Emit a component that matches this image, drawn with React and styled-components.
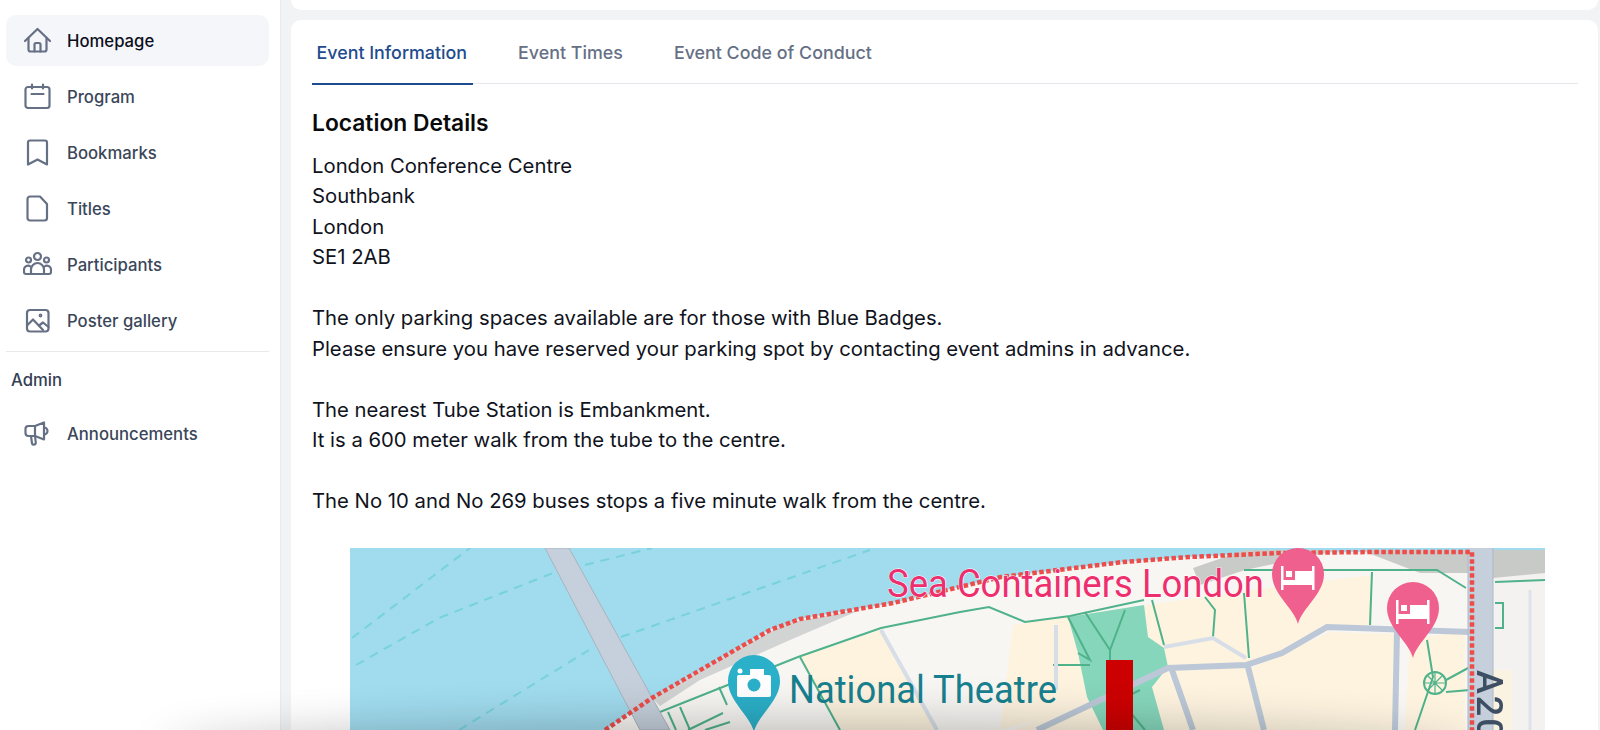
import React from 'react';
import styled, { createGlobalStyle } from 'styled-components';

const GlobalStyle = createGlobalStyle`
  html, body {
    margin: 0;
    height: 100%;
    overflow: hidden;
    background: #f2f3f5;
    font-family: Inter, "Liberation Sans", sans-serif;
  }
  * { box-sizing: border-box; }
`;

const Page = styled.div`
  display: flex;
  height: 730px;
  overflow: hidden;
`;

const Sidebar = styled.nav`
  flex: 0 0 281px;
  padding: 15px 11px 0 6px;
  background: #fff;
  border-right: 1px solid #e9ebef;
`;

const NavList = styled.div`
  display: flex;
  flex-direction: column;
  gap: 5px;
`;

const NavRow = styled.a`
  display: flex;
  align-items: center;
  gap: 15px;
  height: 51px;
  padding-left: 17px;
  border-radius: 10px;
  background: ${(p) => (p.$active ? '#f4f6fa' : 'transparent')};
  color: ${(p) => (p.$active ? '#0b0f1a' : '#3a4659')};
  font-size: 16.7px;
  font-weight: 500;
`;

const IconBox = styled.svg`
  flex: 0 0 29px;
  width: 29px;
  height: 29px;
  fill: none;
  stroke: #667085;
  stroke-width: 2.2;
  stroke-linecap: round;
  stroke-linejoin: round;
`;

const Divider = styled.hr`
  margin: 5px 0 0;
  border: 0;
  border-top: 1px solid #e7e9ed;
`;

const SectionLabel = styled.div`
  padding: 18px 0 18px 5px;
  color: #344054;
  font-size: 16.7px;
  line-height: 20px;
  font-weight: 500;
`;

const Main = styled.main`
  flex: 1;
  min-width: 0;
  display: flex;
  flex-direction: column;
  gap: 10px;
  padding: 0 2px 0 10px;
`;

const TopCard = styled.div`
  flex: 0 0 10px;
  background: #fff;
  border-radius: 0 0 10px 10px;
`;

const ContentCard = styled.section`
  flex: 1;
  padding: 0 20px 0 21px;
  background: #fff;
  border-radius: 10px 10px 0 0;
`;

const TabList = styled.div`
  display: flex;
  gap: 41px;
  height: 64px;
  border-bottom: 1px solid #e4e7ec;
`;

const Tab = styled.div`
  display: flex;
  align-items: center;
  height: 65px;
  padding: 2px 5.5px 0 4.5px;
  font-size: 17.85px;
  font-weight: 500;
  color: ${(p) => (p.$active ? '#1f4b8f' : '#667085')};
  border-bottom: 2px solid ${(p) => (p.$active ? '#1f4b8f' : 'transparent')};
`;

const Heading = styled.h2`
  margin: 0;
  padding-top: 24px;
  font-size: 22.8px;
  line-height: 30px;
  font-weight: 600;
  color: #0a0a0a;
`;

const Body = styled.p`
  margin: 12.5px 0 0;
  font-size: 20.3px;
  line-height: 30.5px;
  color: #10131c;
`;

const MapFrame = styled.svg`
  display: block;
  width: 1195px;
  height: 182px;
  margin: 31px 0 0 38px;
`;

const BottomShadow = styled.div`
  position: fixed;
  left: 170px;
  right: 130px;
  bottom: -50px;
  height: 50px;
  border-radius: 50%;
  box-shadow: 0 0 45px 8px rgba(0, 0, 0, 0.24);
  pointer-events: none;
`;

const HomeIcon = () => (
  <IconBox viewBox="0 0 29 29">
    <path d="M2 15 14.5 3 27 15" />
    <path d="M5.5 12v11.5a2 2 0 0 0 2 2h14a2 2 0 0 0 2-2V12" />
    <path d="M11.5 25.5v-7a1.5 1.5 0 0 1 1.5-1.5h3a1.5 1.5 0 0 1 1.5 1.5v7" />
  </IconBox>
);

const CalendarIcon = () => (
  <IconBox viewBox="0 0 29 29">
    <rect x="2.5" y="5" width="24" height="21" rx="2.5" />
    <path d="M9 2.5v4M20 2.5v4M8.5 12h12" />
  </IconBox>
);

const BookmarkIcon = () => (
  <IconBox viewBox="0 0 29 29">
    <path d="M5 4.5a2 2 0 0 1 2-2h15a2 2 0 0 1 2 2v22l-9.5-5-9.5 5z" />
  </IconBox>
);

const FileIcon = () => (
  <IconBox viewBox="0 0 29 29">
    <path d="M7 2.5h10l7 7.5v14a2.5 2.5 0 0 1-2.5 2.5H7A2.5 2.5 0 0 1 4.5 24V5A2.5 2.5 0 0 1 7 2.5z" />
  </IconBox>
);

const UsersIcon = () => (
  <IconBox viewBox="0 0 29 29">
    <circle cx="14.5" cy="6.5" r="3.5" />
    <circle cx="5.5" cy="10" r="2.5" />
    <circle cx="23.5" cy="10" r="2.5" />
    <path d="M8 24v-4.5a6.5 6.5 0 0 1 13 0V24z" />
    <path d="M8 24H3a2 2 0 0 1-2-2v-2.500a4 4 0 0 1 6.500-3M21 24h5a2 2 0 0 0 2-2v-2.500a4 4 0 0 0-6.500-3" />
  </IconBox>
);

const ImageIcon = () => (
  <IconBox viewBox="0 0 29 29">
    <rect x="4" y="4" width="21.5" height="21.5" rx="3" />
    <path d="M4 19.5 10 13.5 20 24" />
    <path d="M16 19.5 20 16.5 25.5 21" />
    <circle cx="17.5" cy="9.5" r="0.8" />
  </IconBox>
);

const MegaphoneIcon = () => (
  <IconBox viewBox="0 0 29 29">
    <path d="M21 3.5v17L12 17H5.500A3 3 0 0 1 2.500 14v-4a3 3 0 0 1 3-3H12z" />
    <path d="M21 8.5a3.5 3.5 0 0 1 0 7" />
    <path d="M8 17l1 7.5a2 2 0 0 0 3.800-.5L12 17" />
    <path d="M12 7v10" />
  </IconBox>
);

const navItems = [
  { label: 'Homepage', Icon: HomeIcon, active: true },
  { label: 'Program', Icon: CalendarIcon },
  { label: 'Bookmarks', Icon: BookmarkIcon },
  { label: 'Titles', Icon: FileIcon },
  { label: 'Participants', Icon: UsersIcon },
  { label: 'Poster gallery', Icon: ImageIcon },
];

const tabs = ['Event Information', 'Event Times', 'Event Code of Conduct'];

const Pin = ({ x, y, tip, color, children }) => (
  <g>
    <path
      d={`M${x} ${tip} C${x - 4} ${y + 34} ${x - 26} ${y + 20} ${x - 26} ${y} a26 26 0 0 1 52 0 C${x + 26} ${y + 20} ${x + 4} ${y + 34} ${x} ${tip}z`}
      fill={color}
    />
    {children}
  </g>
);

const Bed = ({ x, y }) => (
  <g fill="#fff" stroke="none">
    <rect x={x - 17} y={y - 9} width="2.5" height="24" />
    <rect x={x + 14} y={y - 9} width="2.5" height="24" />
    <rect x={x - 16} y={y + 5} width="32" height="5" />
    <rect x={x - 3} y={y - 4} width="18" height="10" />
    <rect x={x - 12} y={y - 4} width="6" height="6" />
  </g>
);

const mapLabel = {
  fontFamily: 'Roboto, sans-serif',
  lengthAdjust: 'spacingAndGlyphs',
};

const shoreline = 'M605 730 652 698 735 650 770 630 800 619 893 603 1001 577 1123 562 1189 557 1278 553 1376 552';

const LocationMap = () => (
  <MapFrame viewBox="350 548 1195 182">
    <g style={{ filter: 'blur(0.6px)' }}>
      <rect x="350" y="548" width="1195" height="182" fill="#a0dbee" />

      {/* land */}
      <path d={`${shoreline} 1545 551V730z`} fill="#f8f6f3" />
      <path d="M800 657 881 630 937 730H840z" fill="#fdf3df" />
      <path d="M1013 625 1070 616 1250 590 1372 575V625L1330 630 1250 665 1000 730z" fill="#fdf3df" />
      <path d="M1013 730 1170 670 1250 668 1330 632 1395 634V730z" fill="#fdf3df" />
      <path d="M1410 640 1465 630V730H1405z" fill="#fdf3df" />
      <path d="M1493 573H1545V730H1493z" fill="#f3f2f1" />
      <path d="M1493 670H1512V730H1493z" fill="#fbf3e2" />

      {/* shadows on the embankment */}
      <path d="M652 698 735 650 787 623 860 610 790 640 700 680 660 706z" fill="#d2d3d3" />
      <path d="M1193 568 1245 550H1340L1245 570 1200 585z" fill="#c9cbc9" />
      <path d="M1360 550H1468V573H1420z" fill="#c9cbc9" />
      <path d="M1493 550H1545V573L1493 578z" fill="#c8cac8" />

      {/* park */}
      <path d="M1068 617 1144 605 1148 637 1164 648 1168 667 1152 687 1164 730H1103L1087 697 1078 653z" fill="#86d6bb" />

      {/* water path dashes */}
      <g fill="none" stroke="#78d2dc" strokeWidth="2" strokeDasharray="9 7">
        <path d="M352 638 470 548" />
        <path d="M356 665 439 618 553 573" />
        <path d="M585 565 652 548" />
        <path d="M459 730 589 650" />
        <path d="M621 637 870 550" />
      </g>

      {/* footpaths */}
      <g fill="none" stroke="#4fb28a" strokeWidth="2">
        <path d="M660 712 798 657 881 628 960 612 989 607 1025 622 1070 616 1144 600" />
        <path d="M800 657 840 730" />
        <path d="M680 707 690 730M668 712 676 730M723 713 688 730M730 722 705 730M719 687 727 705" />
        <path d="M1152 600 1164 645M1205 597 1215 610 1213 637M1244 593 1249 658" />
        <path d="M1244 570H1437L1466 588M1372 572 1370 625" />
        <path d="M1495 582 1545 580M1495 603H1503V628H1495" />
        <path d="M1427 640 1433 677 1415 730M1446 680 1470 667M1446 692 1470 690" />
        <circle cx="1435" cy="683" r="11" />
        <path d="M1424 683H1446M1435 672V694M1427 675 1443 691M1443 675 1427 691" strokeWidth="1.2" />
        <path d="M1068 617 1090 660 1078 653M1085 612 1110 650 1125 610M1053 665H1090M1110 650V680M1140 690 1120 700 1145 730" />
      </g>

      {/* roads */}
      <g fill="none" stroke="#d7dee7" strokeWidth="4">
        <path d="M881 630 937 730" />
        <path d="M1164 647 1213 638 1246 658" />
        <path d="M1056 625V690" />
      </g>
      <g fill="none" stroke="#bcc8d7" strokeWidth="6">
        <path d="M1037 730 1168 668 1246 665 1282 653 1327 627 1470 632" />
        <path d="M1172 670 1193 730M1248 667 1264 730M1397 632 1395 730" />
      </g>

      {/* bridges */}
      <path d="M545 548H569L670 730H640z" fill="#c5d0dc" stroke="#a9b4bf" strokeWidth="1" />
      <rect x="1468" y="548" width="25" height="182" fill="#c5d0dc" />
      <path d="M1468 548V730M1493 548V730" stroke="#aeb9c5" strokeWidth="1" />
      <path d="M1530 590V730" stroke="#dfe2e8" strokeWidth="3" />

      {/* borough boundary */}
      <path
        d={`${shoreline} 1472 552V730`}
        fill="none"
        stroke="#ec4d4a"
        strokeWidth="4.5"
        strokeDasharray="4.5 2.5"
      />

      <rect x="1106" y="660" width="27" height="70" fill="#cc0000" />

      <text {...mapLabel} x="887" y="597" fontSize="38" fill="#ee2f6e" stroke="#fff" strokeWidth="1" paintOrder="stroke" textLength="377">
        Sea Containers London
      </text>
      <text {...mapLabel} x="789" y="703" fontSize="38" fill="#17808f" textLength="268">
        National Theatre
      </text>
      <text transform="translate(1477 670) rotate(90)" fontFamily="Roboto, sans-serif" fontSize="36" fontWeight="500" fill="#3e4e63" letterSpacing="2">
        A20
      </text>

      <Pin x={1298} y={574} tip={624} color="#f0608e">
        <Bed x={1298} y={575} />
      </Pin>
      <Pin x={1413} y={608} tip={658} color="#f0608e">
        <Bed x={1413} y={609} />
      </Pin>
      <Pin x={754} y={681} tip={732} color="#2bb0c9">
        <rect x="737" y="675" width="34" height="22" rx="2" fill="#fff" />
        <rect x="750" y="669" width="14" height="7" fill="#fff" />
        <circle cx="740" cy="671" r="2.5" fill="#fff" />
        <circle cx="754" cy="685" r="6.5" fill="#2bb0c9" />
      </Pin>
    </g>
  </MapFrame>
);

const App = () => (
  <>
    <GlobalStyle />
    <Page>
      <Sidebar>
        <NavList>
          {navItems.map(({ label, Icon, active }) => (
            <NavRow key={label} $active={active}>
              <Icon />
              {label}
            </NavRow>
          ))}
        </NavList>
        <Divider />
        <SectionLabel>Admin</SectionLabel>
        <NavRow>
          <MegaphoneIcon />
          Announcements
        </NavRow>
      </Sidebar>
      <Main>
        <TopCard />
        <ContentCard>
          <TabList>
            {tabs.map((tab, i) => (
              <Tab key={tab} $active={i === 0}>
                {tab}
              </Tab>
            ))}
          </TabList>
          <Heading>Location Details</Heading>
          <Body>
            London Conference Centre
            <br />
            Southbank
            <br />
            London
            <br />
            SE1 2AB
            <br />
            <br />
            The only parking spaces available are for those with Blue Badges.
            <br />
            Please ensure you have reserved your parking spot by contacting event admins in advance.
            <br />
            <br />
            The nearest Tube Station is Embankment.
            <br />
            It is a 600 meter walk from the tube to the centre.
            <br />
            <br />
            The No 10 and No 269 buses stops a five minute walk from the centre.
          </Body>
          <LocationMap />
        </ContentCard>
      </Main>
      <BottomShadow />
    </Page>
  </>
);

export default App;
